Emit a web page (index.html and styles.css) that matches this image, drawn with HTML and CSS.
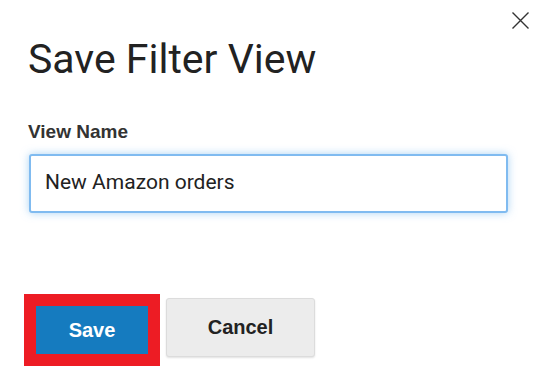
FILE: index.html
```html
<!DOCTYPE html>
<html>
<head>
<meta charset="utf-8">
<link rel="stylesheet" href="styles.css">
</head>
<body>
<div class="dialog">
  <div class="header">
    <h1 class="title">Save Filter View</h1>
    <button class="close" aria-label="Close">
      <svg width="17" height="17" viewBox="0 0 17 17"><path d="M0.5 0.5 L16.5 16.5 M16.5 0.5 L0.5 16.5" stroke="#333" stroke-width="1.4" fill="none"/></svg>
    </button>
  </div>
  <label class="label" for="vn">View Name</label>
  <input id="vn" class="field" type="text" value="New Amazon orders">
  <div class="actions">
    <div class="highlight"><button class="btn btn-primary">Save</button></div>
    <button class="btn btn-default">Cancel</button>
  </div>
</div>
</body>
</html>
```
FILE: styles.css
```css
html, body {
  margin: 0;
  padding: 0;
  background: #fff;
}
.dialog {
  width: 545px;
  height: 367px;
  box-sizing: border-box;
  padding: 12px 16px 0 28px;
  display: flex;
  flex-direction: column;
  align-items: flex-start;
  overflow: hidden;
}
.header {
  display: flex;
  align-items: flex-start;
  justify-content: space-between;
  align-self: stretch;
}
.title {
  margin: 23px 0 0 0;
  font-family: Roboto, "Noto Sans", sans-serif;
  font-weight: 400;
  font-size: 41px;
  line-height: 48px;
  color: #222;
}
.close {
  border: 0;
  background: none;
  padding: 0;
  margin: 0;
  width: 17px;
  height: 17px;
  display: block;
}
.close svg { display: block; }
.label {
  margin-top: 38px;
  font-family: "Liberation Sans", Arial, sans-serif;
  font-weight: 700;
  font-size: 19px;
  line-height: 22px;
  color: #333;
}
.field {
  margin: 11px 0 0 1px;
  box-sizing: border-box;
  width: 479px;
  height: 59px;
  border: 2px solid #80bbf0;
  border-radius: 3px;
  box-shadow: 0 0 8px rgba(102, 175, 233, 0.55);
  padding: 0 14px 4px 14px;
  font-family: Roboto, "Noto Sans", sans-serif;
  font-size: 21px;
  color: #222;
  outline: none;
  background: #fff;
}
.actions {
  margin: 81px 0 0 -4px;
  display: flex;
  align-items: flex-start;
}
.highlight {
  border: 12px solid #ed1c24;
  display: flex;
}
.btn {
  font-family: "Liberation Sans", Arial, sans-serif;
  font-weight: 700;
  font-size: 20px;
  margin: 0;
  cursor: pointer;
}
.btn-primary {
  width: 112px;
  height: 48px;
  border: 0;
  background: #157bbf;
  color: #fff;
  padding: 0;
}
.btn-default {
  margin: 4px 0 0 6px;
  width: 149px;
  height: 59px;
  box-sizing: border-box;
  background: #ececec;
  border: 1px solid #dcdcdc;
  border-radius: 3px;
  box-shadow: 0 1px 2px rgba(0, 0, 0, 0.12);
  color: #222;
  padding: 0;
}
```
